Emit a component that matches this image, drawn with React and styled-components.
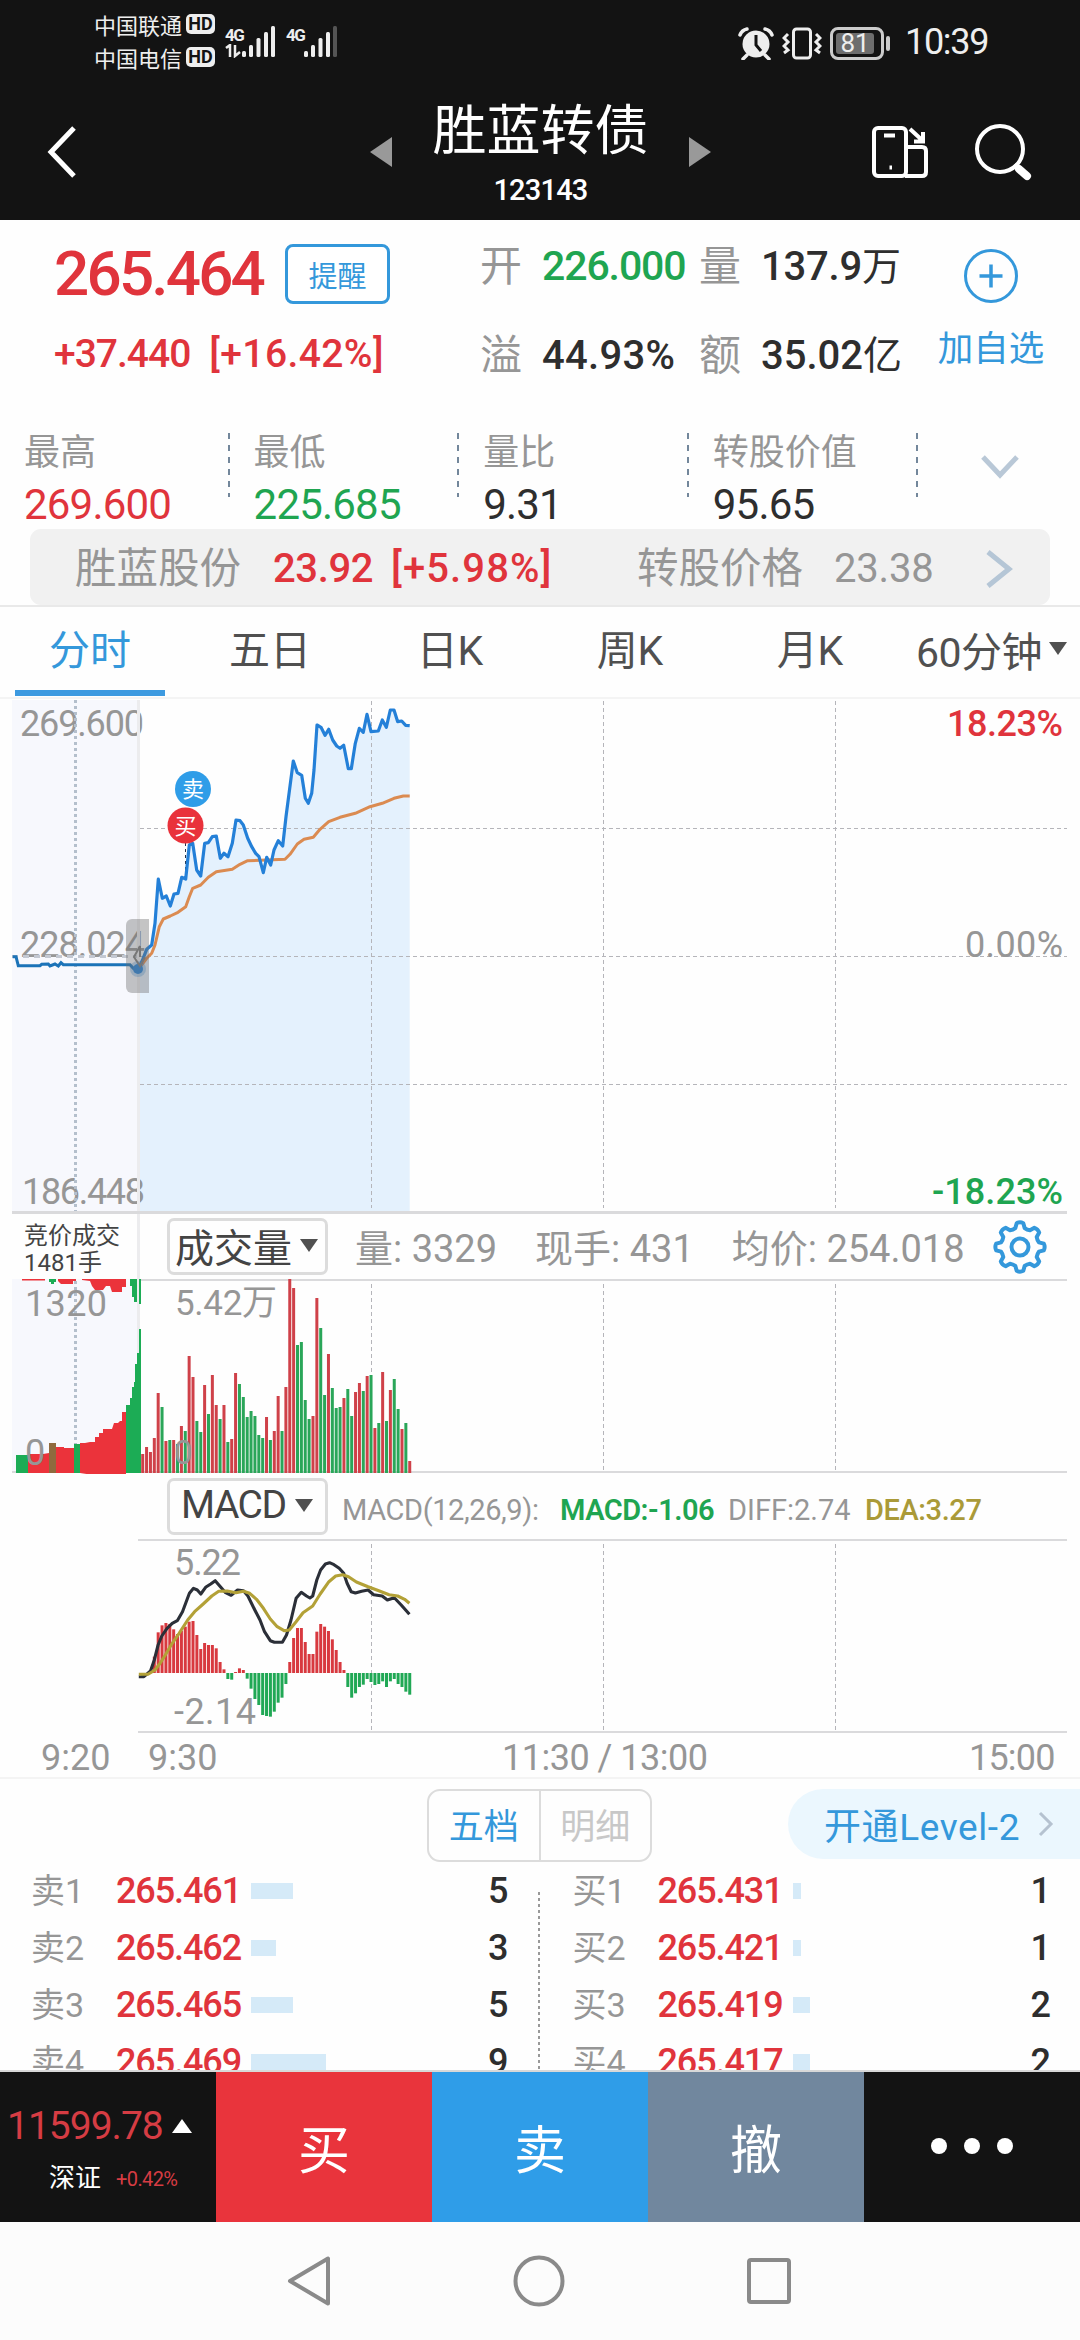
import React from "react";
import styled, { createGlobalStyle } from "styled-components";

const RED = "#e0343c";
const GREEN = "#1fa551";
const BLUE = "#3498db";
const GRAY = "#969696";
const DARK = "#2e2e2e";

const sells = [
  { name: "卖1", price: "265.461", qty: 5, bar: 42 },
  { name: "卖2", price: "265.462", qty: 3, bar: 25 },
  { name: "卖3", price: "265.465", qty: 5, bar: 42 },
  { name: "卖4", price: "265.469", qty: 9, bar: 75 },
];

const buys = [
  { name: "买1", price: "265.431", qty: 1, bar: 8 },
  { name: "买2", price: "265.421", qty: 1, bar: 8 },
  { name: "买3", price: "265.419", qty: 2, bar: 17 },
  { name: "买4", price: "265.417", qty: 2, bar: 17 },
];

const stats = [
  { label: "最高", value: "269.600", color: RED },
  { label: "最低", value: "225.685", color: GREEN },
  { label: "量比", value: "9.31", color: DARK, spacing: -0.8 },
  { label: "转股价值", value: "95.65", color: DARK },
];

// [bar top, direction] for every minute since the open
const volume = [
  [274, "r"], [267, "r"], [272, "r"], [258, "r"], [213, "r"], [227, "g"], [261, "r"], [260, "g"], [260, "r"], [264, "g"],
  [246, "r"], [251, "g"], [176, "r"], [197, "r"], [241, "g"], [252, "g"], [205, "r"], [234, "g"], [195, "r"], [225, "r"],
  [239, "g"], [225, "r"], [262, "g"], [259, "r"], [193, "r"], [204, "g"], [217, "g"], [237, "g"], [231, "g"], [236, "g"],
  [255, "g"], [258, "g"], [237, "r"], [260, "g"], [251, "r"], [216, "r"], [251, "g"], [207, "r"], [99, "r"], [108, "r"],
  [165, "g"], [162, "g"], [220, "g"], [239, "g"], [236, "r"], [118, "r"], [148, "g"], [215, "g"], [174, "r"], [208, "g"],
  [228, "g"], [227, "g"], [218, "r"], [209, "g"], [236, "g"], [212, "r"], [203, "r"], [211, "g"], [196, "r"], [195, "g"],
  [248, "r"], [243, "g"], [192, "r"], [241, "g"], [210, "r"], [199, "g"], [229, "g"], [249, "r"], [243, "g"], [281, "r"],
];

const macd = [
  622, 614, 600, 560, 487, 466, 459, 462, 478, 492, 483, 470, 455, 453, 495, 537, 519, 525, 525, 535, 576, 598, 627,
  629, 606, 595, 600, 626, 656, 687, 705, 735, 738, 740, 725, 698, 683, 642, 576, 504, 474, 474, 516, 552, 552, 485,
  462, 470, 483, 508, 540, 576, 600, 651, 683, 670, 651, 644, 627, 636, 645, 642, 634, 651, 634, 627, 642, 651, 665,
  674,
];

const priceLine =
  "415,838 428,808 440,778 455,765 465,700 475,567 487,625 499,618 511,648 522,612 534,610 545,562 557,567 568,465 578,460 590,540 602,558 614,460 625,458 637,440 649,438 661,505 672,490 684,500 697,460 708,390 720,392 730,405 743,445 755,470 767,490 777,500 790,548 800,502 812,525 822,480 835,452 848,468 858,380 880,213 892,248 905,256 916,325 925,340 935,310 942,240 951,105 963,112 975,136 986,118 998,150 1010,168 1020,175 1031,166 1045,236 1054,236 1066,160 1078,115 1090,127 1101,73 1113,125 1135,123 1147,90 1159,112 1171,60 1182,60 1193,95 1205,93 1217,106 1229,107";

const averageLine =
  "415,838 440,805 455,790 465,765 478,710 490,687 511,678 534,667 557,650 568,620 578,595 602,585 625,562 649,545 697,538 720,523 743,512 800,510 855,508 870,493 892,462 912,448 940,442 960,418 986,395 1020,382 1066,370 1110,350 1147,340 1182,325 1210,318 1229,318";

const auctionLine =
  "38,800 48,800 55,827 120,827 125,823 145,822 150,828 165,822 175,828 183,818 190,824 390,824 400,835 415,838";

const diffLine =
  "403,620 418,620 437,603 448,570 459,525 470,498 485,475 500,460 515,452 530,425 550,370 562,355 573,360 583,372 597,352 612,342 625,332 640,350 655,368 671,376 690,360 707,362 720,378 740,420 755,450 768,485 785,512 797,517 820,517 832,495 845,450 860,385 875,367 890,378 900,384 908,378 920,330 931,300 945,282 957,278 970,284 985,295 998,310 1008,340 1020,365 1032,369 1050,364 1069,360 1085,374 1110,378 1125,390 1145,383 1165,405 1189,433";

const deaLine =
  "403,613 430,613 450,600 465,580 480,555 500,520 520,490 545,450 565,425 590,402 615,378 635,364 660,363 685,368 707,364 725,370 745,388 765,415 785,447 805,470 825,482 840,480 860,455 880,428 908,408 930,372 955,335 975,318 995,314 1012,320 1035,336 1069,350 1100,362 1130,374 1155,378 1175,388 1189,400";

const scale = (points, kx, ky, dy) =>
  points
    .split(" ")
    .map((p) => {
      const [x, y] = p.split(",");
      return `${(x / kx).toFixed(1)},${(y / ky + dy).toFixed(1)}`;
    })
    .join(" ");

const VLines = ({ y1, y2 }) => (
  <g stroke="#b5b5ba" strokeDasharray="4 3">
    {[371.5, 603.5, 835.5].map((x) => (
      <line key={x} x1={x} x2={x} y1={y1} y2={y2} />
    ))}
  </g>
);

const PriceChart = () => {
  const price = scale(priceLine, 3, 3, 690);
  return (
    <Chart height="515" viewBox="0 699 1080 515">
      <rect x="12" y="700" width="126" height="512" fill="#f7f8fd" />
      <polygon points={`${price} 409.7,1211 138,1211`} fill="#e4f1fd" />
      <VLines y1={701} y2={1208} />
      <g stroke="#b5b5ba" strokeDasharray="4 3">
        <line x1="140" x2="1067" y1="828.5" y2="828.5" />
        <line x1="140" x2="1067" y1="956.5" y2="956.5" />
        <line x1="140" x2="1067" y1="1084.5" y2="1084.5" />
      </g>
      <g fill={GRAY} fontSize="36">
        <text x="20" y="736" textLength="124">269.600</text>
        <text x="20" y="957" textLength="125">228.024</text>
        <text x="22" y="1204" textLength="123">186.448</text>
        <text x="965" y="957" textLength="98">0.00%</text>
      </g>
      <g fontSize="36" fontWeight="500">
        <text x="947" y="736" textLength="116" fill={RED}>18.23%</text>
        <text x="932" y="1204" textLength="131" fill={GREEN}>-18.23%</text>
      </g>
      <line x1="12" x2="138" y1="956.5" y2="956.5" stroke="#c3c8d2" strokeWidth="3" strokeDasharray="6 5" />
      <line x1="75.5" x2="75.5" y1="700" y2="1212" stroke="#b4bfcc" strokeWidth="3" strokeDasharray="3 3" />
      <rect x="137" y="700" width="3" height="512" fill="#ececee" />
      <line x1="185.5" x2="185.5" y1="843" y2="880" stroke="#24324a" strokeDasharray="3 3" />
      <polyline points={scale(averageLine, 3, 3, 690)} fill="none" stroke="#db8b51" strokeWidth="3" strokeLinejoin="round" />
      <polyline points={price} fill="none" stroke="#2480d8" strokeWidth="3.200" strokeLinejoin="round" />
      <polyline points={scale(auctionLine, 3, 3, 690)} fill="none" stroke="#1c73b8" strokeWidth="3" />
      <circle cx="138" cy="969" r="8" fill="#2480d8" opacity="0.3" />
      <circle cx="138" cy="969" r="5" fill="#2480d8" />
      <path d="M149 919h-17a6 6 0 0 0-6 6v62a6 6 0 0 0 6 6h17z" fill="#6f6f6f" opacity="0.4" />
      <path d="M140 946l-6 11 6 9 5-9M140 946v11" fill="none" stroke="#777" strokeWidth="2" />
      <circle cx="193" cy="789" r="18" fill="#2f9de8" />
      <circle cx="185.5" cy="825.5" r="18" fill="#e9323b" />
      <g fill="#fff" fontSize="22" textAnchor="middle">
        <text x="193" y="797">卖</text>
        <text x="185.5" y="833.5">买</text>
      </g>
      <rect x="12" y="1211" width="1055" height="3" fill="#dadadc" />
    </Chart>
  );
};

const VolumeChart = () => (
  <Chart height="195" viewBox="0 1279 1080 195">
    <rect x="12" y="1279" width="126" height="193" fill="#f7f8fd" />
    <rect x="140" y="1279" width="927" height="2" fill="#dadadc" />
    <VLines y1={1284} y2={1471} />
    <rect x="12" y="1471" width="1055" height="2" fill="#dadadc" />
    <line x1="75.5" x2="75.5" y1="1281" y2="1446" stroke="#b4bfcc" strokeWidth="3" strokeDasharray="3 3" />
    <rect x="137" y="1279" width="3" height="150" fill="#ececee" />
    <g fill="#1cac55">
      <rect x="16" y="1455" width="12" height="18" />
      <rect x="74" y="1444" width="6" height="29" />
      <path d="M126 1473V1405h4v-7h2v-11h2v-5h1v-18h2v-11h2v-24h2v144z" />
      <path d="M130 1279h11v25h-2v-25zM130 1279h7v23h-3v-5h-2v-11h-2z" />
      <path d="M49 1279h7v3h-2v2h-3v-2h-2z" />
    </g>
    <g fill="#eb333b">
      <path d="M28 1473v-19h15l6-1v20zM56 1473v-26h8v1h10v25zM80 1473v-30h5l5-1h5v-5h4v-4h4v-4h9l2-6h4l2-2h2v-9h4v68z" />
      <path d="M22 1279h23v1.500H22zM58 1279h18v2h-3v3H61l-3-3z" />
      <path d="M82 1279h44v8h-4v5h-10l-2-6h-4l-3 4h-8l-3-4-2-5-8-1z" />
    </g>
    <rect x="49" y="1443" width="7" height="30" fill="#8f6a3e" />
    {volume.map(([top, dir], i) => (
      <rect
        key={i}
        x={141.2 + i * 3.87}
        y={1180 + top}
        width="3"
        height={293 - top}
        fill={dir === "r" ? "#cf4149" : "#2aa659"}
      />
    ))}
    <g fill={GRAY} fontSize="35">
      <text x="25" y="1316" fontSize="36" textLength="82">1320</text>
      <text x="25" y="1465" fontSize="36">0</text>
      <text x="175" y="1315" textLength="102">5.42万</text>
      <text x="174" y="1464" fontSize="33">0</text>
    </g>
  </Chart>
);

const MacdChart = () => (
  <Chart height="194" viewBox="0 1539 1080 194">
    <rect x="138" y="1539" width="929" height="2" fill="#dadadc" />
    <VLines y1={1544} y2={1731} />
    <rect x="138" y="1731" width="929" height="2" fill="#dadadc" />
    <g fill={GRAY} fontSize="36">
      <text x="174" y="1575" textLength="67">5.22</text>
      <text x="174" y="1724" textLength="82">-2.14</text>
    </g>
    {macd.map((v, i) => {
      const y = v / 3 + 1470;
      return (
        <rect
          key={i}
          x={141.2 + i * 3.87}
          y={Math.min(y, 1673)}
          width="3"
          height={Math.abs(y - 1673)}
          fill={y < 1673 ? "#d8393f" : "#20a855"}
        />
      );
    })}
    <polyline points={scale(diffLine, 2.904, 3, 1470)} fill="none" stroke="#2b2f38" strokeWidth="3.100" strokeLinejoin="round" />
    <polyline points={scale(deaLine, 2.904, 3, 1470)} fill="none" stroke="#b3a137" strokeWidth="3.100" strokeLinejoin="round" />
  </Chart>
);

const Signal = ({ dim }) => (
  <svg width="34" height="32" viewBox="0 0 34 32" fill="#eee">
    <rect x="0" y="25" width="4" height="6" rx="1.500" />
    <rect x="7" y="19" width="4" height="12" rx="1.500" />
    <rect x="14.500" y="12" width="4" height="19" rx="1.500" />
    <rect x="22" y="6" width="4" height="25" rx="1.500" />
    <rect x="29" y="0" width="4" height="31" rx="1.500" opacity={dim ? 0.3 : 1} />
  </svg>
);

const Chevron = ({ w, h, color, stroke = 4 }) => (
  <svg width={w} height={h} viewBox={`0 0 ${w} ${h}`} fill="none" stroke={color} strokeWidth={stroke}>
    <path d={`M3 2L${w - 4} ${h / 2}L3 ${h - 2}`} />
  </svg>
);

// eight-toothed cog outline
const cog = Array.from({ length: 8 }, (_, i) => {
  const at = (r, deg) => {
    const a = ((deg + i * 45 - 90) * Math.PI) / 180;
    return `${(27 + r * Math.cos(a)).toFixed(1)} ${(27 + r * Math.sin(a)).toFixed(1)}`;
  };
  return `${i ? "L" : "M"}${at(24, -8)}Q${at(25.5, 0)} ${at(24, 8)}L${at(19.5, 14)}Q${at(18.5, 22.5)} ${at(19.5, 31)}`;
}).join("");

const Book = ({ rows, buy }) => (
  <BookSide $buy={buy}>
    {rows.map((row) => (
      <BookRow key={row.name}>
        <Text $size={34} $color={GRAY}>{row.name}</Text>
        <Text $size={36} $color={RED} $weight={500} $spacing={-1.1}>{row.price}</Text>
        <Depth style={{ width: row.bar }} />
        <Text $size={36} $color={DARK} $weight={500}>{row.qty}</Text>
      </BookRow>
    ))}
  </BookSide>
);

const App = () => {
  return (
    <Page>
      <GlobalStyle />
      <StatusBar>
        <Carriers>
          <Carrier>中国联通<Hd>HD</Hd></Carrier>
          <Carrier>中国电信<Hd>HD</Hd></Carrier>
        </Carriers>
        <Network>
          <span>4G</span>
          <svg width="16" height="14" viewBox="0 0 16 14" fill="none" stroke="#eee" strokeWidth="2.500">
            <path d="M1 4l4-3v12M10 1v11l5-4" />
          </svg>
        </Network>
        <Signal />
        <Network $second>
          <span>4G</span>
        </Network>
        <Signal dim />
        <StatusIcons>
          <svg width="36" height="33" viewBox="0 0 36 33">
            <circle cx="18" cy="17" r="13.500" fill="#eee" />
            <path d="M18 8v10l5 6" fill="none" stroke="#131313" strokeWidth="3" />
            <path d="M2 8Q4 3 9 2M34 8Q32 3 27 2M9 28l-4 4M27 28l4 4" fill="none" stroke="#eee" strokeWidth="3.500" strokeLinecap="round" />
          </svg>
          <svg width="40" height="33" viewBox="0 0 40 33" fill="none" stroke="#eee" strokeWidth="3">
            <rect x="11.500" y="2" width="17" height="29" rx="3" />
            <path d="M6 7l-4 4 4 4-4 4 4 4-4 3M34 7l4 4-4 4 4 4-4 4 4 3" />
          </svg>
          <Battery><span>81</span></Battery>
        </StatusIcons>
        <Text $size={36} $color="#eee" $spacing={-1.3}>10:39</Text>
      </StatusBar>

      <TitleBar>
        <svg width="30" height="52" viewBox="0 0 30 52" fill="none" stroke="#fff" strokeWidth="5">
          <path d="M27 2L4 26l23 24" />
        </svg>
        <Arrow viewBox="0 0 22 30"><path d="M22 0v30L0 15z" /></Arrow>
        <TitleText>
          <Text $size={54} $color="#fff" $line={64}>胜蓝转债</Text>
          <Text $size={29} $color="#fff" $weight={500} $spacing={-0.8} $line={36}>123143</Text>
        </TitleText>
        <Arrow viewBox="0 0 22 30"><path d="M0 0v30l22-15z" /></Arrow>
        <svg width="58" height="54" viewBox="0 0 58 54" fill="none" stroke="#fff" strokeWidth="4">
          <rect x="3" y="3" width="32" height="48" rx="4" />
          <path d="M13 10.500h11M18.500 42.500h2.500M37 22h14q4 0 4 4v21q0 4-4 4H34M39 4l13 12M52 7v9.500h-9" />
        </svg>
        <svg width="58" height="58" viewBox="0 0 58 58" fill="none" stroke="#fff" strokeWidth="4">
          <circle cx="26" cy="26" r="23" />
          <path d="M45 46l8 7" strokeWidth="8" strokeLinecap="round" />
          <path d="M41 41l4 4" />
        </svg>
      </TitleBar>

      <Quote>
        <PriceBlock>
          <PriceLine>
            <Text $size={62} $color={RED} $weight={500} $spacing={-2.8}>265.464</Text>
            <Remind>提醒</Remind>
          </PriceLine>
          <ChangeLine>
            <Text $size={39} $color={RED} $weight={500} $spacing={-1}>+37.440</Text>
            <Text $size={39} $color={RED} $weight={500} $spacing={0.4}>[+16.42%]</Text>
          </ChangeLine>
        </PriceBlock>
        <Facts>
          <Text $size={42} $color={GRAY}>开</Text>
          <Text $size={41} $color={GREEN} $weight={500} $spacing={-1.1}>226.000</Text>
          <Text $size={42} $color={GRAY}>量</Text>
          <Text $size={40} $color={DARK} $weight={500} $spacing={-0.2}>137.9<Thin>万</Thin></Text>
          <Text $size={42} $color={GRAY}>溢</Text>
          <Text $size={40} $color={DARK} $weight={500} $spacing={0.3}>44.93%</Text>
          <Text $size={42} $color={GRAY}>额</Text>
          <Text $size={40} $color={DARK} $weight={500}>35.02<Thin>亿</Thin></Text>
        </Facts>
        <Watch>
          <svg width="56" height="56" viewBox="0 0 56 56" fill="none" stroke={BLUE} strokeWidth="3">
            <circle cx="28" cy="28" r="25.500" />
            <path d="M28 16.500v23M16.500 28h23" strokeWidth="3.500" />
          </svg>
          <Text $size={35.5} $color={BLUE} $line={44}>加自选</Text>
        </Watch>
      </Quote>

      <Stats>
        {stats.map((s) => (
          <Stat key={s.label}>
            <div>
              <Text $size={36} $color={GRAY} $line={50}>{s.label}</Text>
              <Text $size={42} $color={s.color} $spacing={s.spacing || -0.8} $line={54}>{s.value}</Text>
            </div>
            <svg width="2" height="64"><line x1="1" x2="1" y1="0" y2="64" stroke="#73879b" strokeWidth="2" strokeDasharray="6 6" /></svg>
          </Stat>
        ))}
        <Expand width="40" height="26" viewBox="0 0 40 26">
          <path d="M3 3l17 18L37 3" />
        </Expand>
      </Stats>

      <Underlying>
        <Text $size={41.5} $color={GRAY}>胜蓝股份</Text>
        <Text $size={40} $color={RED} $weight={500} $spacing={-0.4}>23.92</Text>
        <Text $size={40} $color={RED} $weight={500} $spacing={1.1}>[+5.98%]</Text>
        <Text $size={41.5} $color={GRAY}>转股价格</Text>
        <Text $size={40} $color={GRAY} $spacing={-0.2}>23.38</Text>
        <Chevron w={28} h={38} color="#b5c6d6" stroke={5} />
      </Underlying>

      <Tabs>
        {["分时", "五日", "日K", "周K", "月K"].map((t, i) => (
          <Tab key={t} $active={i === 0}>{t}</Tab>
        ))}
        <Tab $wide>60分钟<Caret /></Tab>
      </Tabs>

      <PriceChart />

      <Toolbar $height={65}>
        <Auction>
          <span>竞价成交</span>
          <span>1481手</span>
        </Auction>
        <Select>成交量<Caret /></Select>
        <VolumeInfo>
          <span>量: 3329</span>
          <span>现手: 431</span>
          <span>均价: 254.018</span>
        </VolumeInfo>
        <svg width="54" height="54" viewBox="0 0 54 54" fill="none" stroke={BLUE} strokeWidth="4" strokeLinejoin="round">
          <path d={`${cog}Z`} />
          <circle cx="27" cy="27" r="8.500" />
        </svg>
      </Toolbar>

      <VolumeChart />

      <Toolbar $height={65}>
        <Auction $blank />
        <Select $latin>MACD<Caret /></Select>
        <MacdInfo>
          <Text $size={29} $color={GRAY} $spacing={-0.4}>MACD(12,26,9):</Text>
          <Text $size={29} $color={GREEN} $weight={600} $spacing={-0.5}>MACD:-1.06</Text>
          <Text $size={29} $color={GRAY}>DIFF:2.74</Text>
          <Text $size={29} $color="#aa9a38" $weight={500} $spacing={-0.4}>DEA:3.27</Text>
        </MacdInfo>
      </Toolbar>

      <MacdChart />

      <TimeAxis>
        <Text $size={36} $color={GRAY}>9:20</Text>
        <Text $size={36} $color={GRAY}>9:30</Text>
        <Text $size={36} $color={GRAY} $spacing={-0.5}>11:30 / 13:00</Text>
        <Text $size={36} $color={GRAY} $spacing={-0.8}>15:00</Text>
      </TimeAxis>

      <BookHead>
        <Segment>
          <SegmentItem $active>五档</SegmentItem>
          <SegmentItem>明细</SegmentItem>
        </Segment>
        <Level>
          开通Level-2
          <Chevron w={18} h={26} color="#b5c2d0" stroke={3} />
        </Level>
      </BookHead>

      <Books>
        <Book rows={sells} />
        <BookDivider />
        <Book rows={buys} buy />
      </Books>

      <Actions>
        <Index>
          <IndexLine>
            <Text $size={39} $color="#d63c43" $spacing={-1}>11599.78</Text>
            <svg width="20" height="14" viewBox="0 0 20 14"><path d="M10 0l10 14H0z" fill="#fff" /></svg>
          </IndexLine>
          <IndexLine $small>
            <Text $size={26} $color="#fff">深证</Text>
            <Text $size={20} $color="#d63c43" $spacing={-0.6}>+0.42%</Text>
          </IndexLine>
        </Index>
        <Action $bg="#e9343c">买</Action>
        <Action $bg="#2f9de8">卖</Action>
        <Action $bg="#71879e">撤</Action>
        <Action $bg="#131313">
          <Dot />
          <Dot />
          <Dot />
        </Action>
      </Actions>

      <NavBar>
        <svg width="48" height="54" viewBox="0 0 48 54"><path d="M43 4.500v45L5 27z" /></svg>
        <svg width="54" height="54" viewBox="0 0 54 54"><circle cx="27" cy="27" r="23.500" /></svg>
        <svg width="48" height="54" viewBox="0 0 48 54"><rect x="4" y="6" width="40" height="42" rx="2" /></svg>
      </NavBar>
    </Page>
  );
};

export default App;

const GlobalStyle = createGlobalStyle`
  * {
    box-sizing: border-box;
  }

  body {
    margin: 0;
    background: #fff;
    font-family: Roboto, "Noto Sans CJK SC", sans-serif;
  }

  svg {
    display: block;
    flex: none;
  }
`;

const Page = styled.main`
  width: 1080px;
  height: 2340px;
  overflow: hidden;
  display: flex;
  flex-direction: column;
  background: #fefefe;

  > * {
    flex: none;
  }
`;

const Text = styled.span`
  display: block;
  white-space: nowrap;
  font-size: ${(p) => p.$size}px;
  line-height: ${(p) => (p.$line ? `${p.$line}px` : "1.15")};
  font-weight: ${(p) => p.$weight || 400};
  color: ${(p) => p.$color};
  letter-spacing: ${(p) => p.$spacing || 0}px;
`;

const Thin = styled.span`
  font-weight: 400;
  font-size: 39px;
`;

const StatusBar = styled.header`
  display: flex;
  align-items: center;
  height: 86px;
  padding-left: 94px;
  background: #131313;
  color: #eee;

  > svg {
    margin-top: -2px;
  }
`;

const Carriers = styled.div`
  width: 131px;
  padding-bottom: 5px;
`;

const Carrier = styled.div`
  display: flex;
  align-items: center;
  gap: 4px;
  height: 33px;
  font-size: 22px;
`;

const Hd = styled.b`
  width: 29px;
  height: 20px;
  border-radius: 5px;
  background: #eee;
  color: #131313;
  font-size: 18px;
  line-height: 20px;
  text-align: center;
`;

const Network = styled.div`
  display: flex;
  flex-direction: column;
  width: ${(p) => (p.$second ? 18 : 17)}px;
  height: 34px;
  margin-left: ${(p) => (p.$second ? 10 : 0)}px;
  font-size: 17px;
  font-weight: 700;
  letter-spacing: -1.5px;
  line-height: 18px;
`;

const StatusIcons = styled.div`
  display: flex;
  align-items: center;
  gap: 8px;
  width: 167px;
  margin-left: 400px;
`;

const Battery = styled.div`
  position: relative;
  width: 54px;
  height: 33px;
  padding: 3px;
  border: 3px solid #ccc;
  border-radius: 8px;
  color: #eee;
  font-size: 26px;
  line-height: 21px;
  text-align: center;

  span {
    display: block;
    width: 38px;
    background: #6d6d6d;
    border-radius: 3px;
  }

  &::after {
    content: "";
    position: absolute;
    right: -9px;
    top: 6px;
    width: 4px;
    height: 15px;
    border-radius: 2px;
    background: #ccc;
  }
`;

const TitleBar = styled.header`
  display: grid;
  grid-template-columns: 323px 22px 297px 182px 103px 1fr;
  align-items: center;
  height: 134px;
  padding: 0 0 3px 47px;
  background: #131313;
`;

const Arrow = styled.svg`
  width: 22px;
  height: 30px;
  fill: #999;
`;

const TitleText = styled.div`
  display: flex;
  flex-direction: column;
  align-items: center;
  gap: 8px;
  padding-top: 5px;
`;

const Quote = styled.section`
  display: flex;
  height: 208px;
  padding: 13px 0 0 54px;
`;

const PriceBlock = styled.div`
  width: 426px;
`;

const PriceLine = styled.div`
  display: flex;
  align-items: center;
  height: 82px;
  gap: 22px;
`;

const Remind = styled.button`
  width: 105px;
  height: 60px;
  padding: 0;
  border: 3px solid ${BLUE};
  border-radius: 8px;
  background: #fff;
  color: ${BLUE};
  font: inherit;
  font-size: 29px;
`;

const ChangeLine = styled.div`
  display: flex;
  align-items: center;
  gap: 19px;
  height: 79px;
`;

const Facts = styled.div`
  display: grid;
  grid-template-columns: 62px 157px 62px 1fr;
  grid-template-rows: 68px 110px;
  align-content: start;
  align-items: center;
  width: 452px;
`;

const Watch = styled.div`
  display: flex;
  flex-direction: column;
  align-items: center;
  gap: 23px;
  width: 118px;
  padding-top: 15px;
`;

const Stats = styled.section`
  display: flex;
  height: 101px;
  padding-left: 24px;
`;

const Stat = styled.div`
  display: flex;
  justify-content: space-between;
  width: 229.6px;
  padding-right: 24px;

  svg {
    margin-top: 5px;
  }
`;

const Expand = styled.svg`
  margin: 26px 0 0 38px;
  fill: none;
  stroke: #b9c8d7;
  stroke-width: 5;
`;

const Underlying = styled.section`
  display: grid;
  grid-template-columns: 198px 118px 246px 197px 151px 1fr;
  align-items: center;
  width: 1020px;
  height: 76px;
  margin-left: 30px;
  padding: 3px 0 0 45px;
  border-radius: 11px;
  background: #f1f1f1;
`;

const Tabs = styled.nav`
  display: flex;
  height: 94px;
  border-top: 2px solid #e9e9e9;
  border-bottom: 2px solid #f4f4f4;
`;

const Tab = styled.div`
  position: relative;
  display: flex;
  align-items: center;
  justify-content: center;
  gap: 7px;
  width: 180px;
  padding-bottom: 11px;
  padding-top: ${(p) => (p.$wide ? 4 : 0)}px;
  padding-left: ${(p) => (p.$wide ? 3 : 0)}px;
  font-size: 41px;
  letter-spacing: ${(p) => (p.$wide ? -0.5 : 0)}px;
  color: ${(p) => (p.$active ? BLUE : "#505050")};

  &::after {
    content: "";
    display: ${(p) => (p.$active ? "block" : "none")};
    position: absolute;
    left: 15px;
    bottom: 1px;
    width: 150px;
    height: 6px;
    background: #3d9ae0;
  }
`;

const Caret = styled.i`
  border: 9px solid transparent;
  border-top: 13px solid #505050;
  border-bottom: 0;
`;

const Chart = styled.svg`
  width: 1080px;
  font-family: Roboto, "Noto Sans CJK SC", sans-serif;
`;

const Toolbar = styled.div`
  display: flex;
  align-items: center;
  height: ${(p) => p.$height}px;
`;

const Auction = styled.div`
  display: flex;
  flex-direction: column;
  width: 140px;
  height: 100%;
  margin-right: 27px;
  padding: 9px 0 0 24px;
  border-right: 3px solid ${(p) => (p.$blank ? "transparent" : "#ececee")};
  font-size: 24px;
  line-height: 27px;
  color: #444;
`;

const Select = styled.div`
  display: flex;
  align-items: center;
  justify-content: space-between;
  width: 161px;
  height: 57px;
  padding: 0 ${(p) => (p.$latin ? 12 : 7)}px 3px ${(p) => (p.$latin ? 11 : 5)}px;
  border: 3px solid #dcdcdc;
  border-radius: 7px;
  font-size: 39px;
  letter-spacing: ${(p) => (p.$latin ? -1.5 : 0)}px;
  color: #444;
`;

const VolumeInfo = styled.div`
  display: flex;
  width: 665px;
  padding: 0 0 3px 27px;
  gap: 38px;
  font-size: 38px;
  white-space: nowrap;
  color: ${GRAY};
`;

const MacdInfo = styled.div`
  display: grid;
  grid-template-columns: 218px 168px 137px auto;
  padding: 9px 0 0 14px;
`;

const TimeAxis = styled.div`
  display: grid;
  grid-template-columns: 107px 354px 467px auto;
  align-items: center;
  height: 46px;
  padding: 5px 0 0 41px;
  border-bottom: 2px solid #f4f4f4;
`;

const BookHead = styled.div`
  display: flex;
  justify-content: space-between;
  height: 83px;
  padding: 10px 0 0 427px;
`;

const Segment = styled.div`
  display: flex;
  width: 225px;
  height: 73px;
  border: 2px solid #dcdcdc;
  border-radius: 13px;
`;

const SegmentItem = styled.div`
  flex: 1;
  line-height: 74px;
  text-align: center;
  font-size: 35px;
  color: ${(p) => (p.$active ? BLUE : "#c8c8c8")};

  & + & {
    border-left: 2px solid #dcdcdc;
  }
`;

const Level = styled.div`
  display: flex;
  align-items: center;
  justify-content: space-between;
  width: 292px;
  height: 70px;
  padding: 0 25px 0 36px;
  border-radius: 35px 0 0 35px;
  background: #ebf7fe;
  color: ${BLUE};
  font-size: 37px;
  letter-spacing: 0.6px;
`;

const Books = styled.section`
  display: flex;
  height: 210px;
  overflow: hidden;
  border-bottom: 2px solid #d8d8d8;
`;

const BookSide = styled.div`
  width: ${(p) => (p.$buy ? 541 : 538)}px;
  padding-left: ${(p) => (p.$buy ? 33 : 31)}px;
  padding-right: ${(p) => (p.$buy ? 29 : 29)}px;
`;

const BookRow = styled.div`
  display: grid;
  grid-template-columns: 85px 135px 1fr auto;
  align-items: center;
  height: 57px;

  ${Text} {
    padding-top: 3px;
  }
`;

const Depth = styled.div`
  height: 16px;
  background: #d5eaf8;
`;

const BookDivider = styled.div`
  width: 2px;
  margin-top: 30px;
  background: repeating-linear-gradient(#999 0 3px, transparent 3px 6px);
`;

const Actions = styled.footer`
  display: grid;
  grid-template-columns: repeat(5, 1fr);
  height: 150px;
`;

const Action = styled.div`
  display: flex;
  align-items: center;
  justify-content: center;
  gap: 17px;
  padding-bottom: 2px;
  background: ${(p) => p.$bg};
  color: #fff;
  font-size: 52px;
`;

const Dot = styled.i`
  width: 16px;
  height: 16px;
  border-radius: 50%;
  background: #fff;
`;

const Index = styled.div`
  padding: 30px 0 0 7px;
  background: #131313;
`;

const IndexLine = styled.div`
  display: flex;
  align-items: center;
  gap: ${(p) => (p.$small ? 15 : 9)}px;
  height: ${(p) => (p.$small ? 34 : 48)}px;
  padding-left: ${(p) => (p.$small ? 42 : 0)}px;
  padding-top: ${(p) => (p.$small ? 4 : 0)}px;
  margin-bottom: 10px;
`;

const NavBar = styled.footer`
  display: flex;
  align-items: center;
  justify-content: space-between;
  height: 118px;
  padding: 0 287px 0 285px;
  background: #fcfcfc;

  svg {
    fill: none;
    stroke: #8a8a8a;
    stroke-width: 4;
    stroke-linejoin: round;
  }
`;
